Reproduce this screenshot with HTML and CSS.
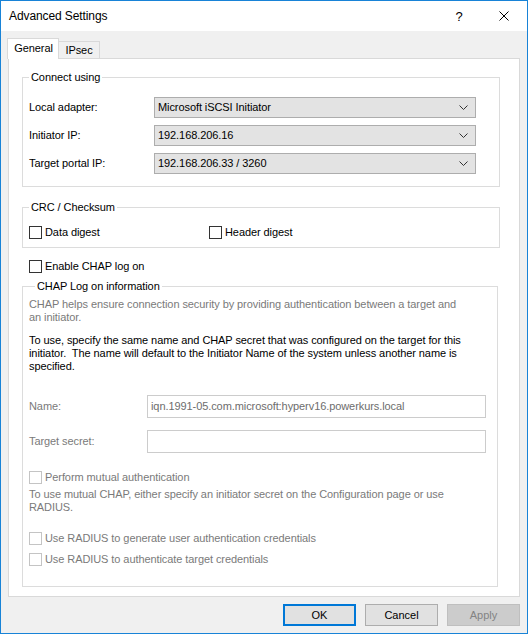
FILE: index.html
```html
<!DOCTYPE html>
<html>
<head>
<meta charset="utf-8">
<title>Advanced Settings</title>
<link rel="stylesheet" href="styles.css">
</head>
<body>
<div class="window">
  <div class="titlebar">
    <span class="title">Advanced Settings</span>
    <span class="help">?</span>
    <span class="close"><svg width="10" height="10" viewBox="0 0 10 10"><path d="M0.5 0.5 L9.5 9.5 M9.5 0.5 L0.5 9.5" stroke="#000" stroke-width="1" fill="none"/></svg></span>
  </div>
  <div class="client">
    <div class="tabs">
      <div class="tab active">General</div>
      <div class="tab">IPsec</div>
    </div>
    <div class="panel">
      <fieldset class="group connect">
        <legend>Connect using</legend>
        <div class="row first">
          <span class="lbl">Local adapter:</span>
          <div class="combo"><span>Microsoft iSCSI Initiator</span><svg class="chev" width="9" height="5" viewBox="0 0 9 5"><path d="M0.5 0.5 L4.5 4.5 L8.5 0.5" stroke="#333" fill="none"/></svg></div>
        </div>
        <div class="row">
          <span class="lbl">Initiator IP:</span>
          <div class="combo"><span>192.168.206.16</span><svg class="chev" width="9" height="5" viewBox="0 0 9 5"><path d="M0.5 0.5 L4.5 4.5 L8.5 0.5" stroke="#333" fill="none"/></svg></div>
        </div>
        <div class="row">
          <span class="lbl">Target portal IP:</span>
          <div class="combo"><span>192.168.206.33 / 3260</span><svg class="chev" width="9" height="5" viewBox="0 0 9 5"><path d="M0.5 0.5 L4.5 4.5 L8.5 0.5" stroke="#333" fill="none"/></svg></div>
        </div>
      </fieldset>

      <fieldset class="group crc">
        <legend>CRC / Checksum</legend>
        <div class="checks">
          <label class="check data"><span class="box"></span>Data digest</label>
          <label class="check"><span class="box"></span>Header digest</label>
        </div>
      </fieldset>

      <label class="check enable"><span class="box"></span>Enable CHAP log on</label>

      <fieldset class="group chap">
        <legend>CHAP Log on information</legend>
        <p class="gray intro">CHAP helps ensure connection security by providing authentication between a target and<br>an initiator.</p>
        <p class="usage">To use, specify the same name and CHAP secret that was configured on the target for this<br>initiator.&nbsp; The name will default to the Initiator Name of the system unless another name is<br>specified.</p>
        <div class="field name">
          <span class="flbl">Name:</span>
          <div class="input">iqn.1991-05.com.microsoft:hyperv16.powerkurs.local</div>
        </div>
        <div class="field secret">
          <span class="flbl">Target secret:</span>
          <div class="input"></div>
        </div>
        <label class="check dis mutual"><span class="box"></span>Perform mutual authentication</label>
        <p class="gray mutualhelp">To use mutual CHAP, either specify an initiator secret on the Configuration page or use<br>RADIUS.</p>
        <label class="check dis radius1"><span class="box"></span>Use RADIUS to generate user authentication credentials</label>
        <label class="check dis radius2"><span class="box"></span>Use RADIUS to authenticate target credentials</label>
      </fieldset>
    </div>
    <div class="buttons">
      <button class="btn default">OK</button>
      <button class="btn">Cancel</button>
      <button class="btn disabled">Apply</button>
    </div>
  </div>
</div>
</body>
</html>
```
FILE: styles.css
```css
html, body {
  margin: 0;
  padding: 0;
  background: #ffffff;
}
body {
  font-family: "Liberation Sans", Arial, sans-serif;
  font-size: 11px;
  line-height: 13px;
  letter-spacing: -0.08px;
  color: #000;
}
.window {
  width: 528px;
  height: 634px;
  box-sizing: border-box;
  border: 1px solid #1883d7;
  background: #f0f0f0;
  display: flex;
  flex-direction: column;
}
.titlebar {
  height: 30px;
  background: #fff;
  display: flex;
  align-items: center;
  flex-shrink: 0;
}
.title {
  font-size: 12px;
  letter-spacing: -0.1px;
  padding-left: 8px;
  flex: 1;
  padding-top: 1px;
}
.help {
  font-size: 13px;
  width: 10px;
  text-align: center;
  margin-right: 35px;
  padding-top: 1px;
}
.close {
  width: 10px;
  height: 10px;
  margin-right: 18px;
  display: flex;
}
.client {
  flex: 1;
  padding: 7px 7px 0 7px;
  display: flex;
  flex-direction: column;
}
.tabs {
  display: flex;
  align-items: flex-end;
  height: 20px;
  margin-left: -1px;
}
.tab {
  box-sizing: border-box;
  border: 1px solid #d9d9d9;
  border-bottom: none;
  background: #f0f0f0;
  height: 17px;
  width: 42px;
  margin-left: -1px;
  text-align: center;
  line-height: 17px;
}
.tab.active {
  background: #fff;
  height: 21px;
  width: 52px;
  margin-left: 0;
  margin-bottom: -1px;
  position: relative;
  z-index: 1;
  line-height: 18px;
  padding-left: 1px;
}
.panel {
  box-sizing: border-box;
  height: 539px;
  background: #fff;
  border: 1px solid #d9d9d9;
  padding: 12px 0 0 13px;
  display: flex;
  flex-direction: column;
  align-items: flex-start;
}
.group {
  margin: 0;
  border: 1px solid #dcdcdc;
  padding: 0 6px;
  box-sizing: border-box;
  width: 478px;
  min-width: 0;
}
.group legend {
  padding: 0 2px;
  margin-left: 0;
  line-height: 13px;
}
.connect {
  padding-top: 13px;
  padding-bottom: 12px;
}
.row {
  display: flex;
  align-items: center;
  margin-top: 7px;
}
.row.first {
  margin-top: 0;
}
.lbl {
  width: 125px;
}
.combo {
  box-sizing: border-box;
  width: 322px;
  height: 21px;
  border: 1px solid #adadad;
  background: #e3e3e3;
  display: flex;
  align-items: center;
  justify-content: space-between;
  padding: 0 7px 0 3px;
}
.chev {
  display: block;
}
.crc {
  margin-top: 14px;
  padding-top: 12px;
  padding-bottom: 8px;
}
.checks {
  display: flex;
}
.check {
  display: flex;
  align-items: center;
  height: 13px;
}
.check.data {
  width: 180px;
}
.box {
  box-sizing: border-box;
  width: 13px;
  height: 13px;
  border: 1px solid #333;
  background: #fff;
  margin-right: 3px;
  flex-shrink: 0;
}
.enable {
  margin-top: 12px;
  margin-left: 7px;
}
.chap {
  margin-top: 7px;
  width: 476px;
  padding-top: 5px;
  padding-bottom: 20px;
}
.chap legend {
  margin-left: 6px;
}
p {
  margin: 0;
  white-space: nowrap;
}
.gray {
  color: #7a7a7a;
}
.usage {
  margin-top: 10px;
}
.field {
  display: flex;
  align-items: center;
  color: #7a7a7a;
}
.field.name {
  margin-top: 22px;
}
.field.secret {
  margin-top: 12px;
}
.flbl {
  width: 118px;
}
.input {
  box-sizing: border-box;
  width: 339px;
  height: 23px;
  border: 1px solid #cccccc;
  background: #fff;
  padding: 0 3px;
  line-height: 21px;
  color: #6d6d6d;
}
.check.dis {
  color: #7a7a7a;
}
.check.dis .box {
  border-color: #c4c4c4;
}
.mutual {
  margin-top: 18px;
}
.mutualhelp {
  margin-top: 4px;
}
.radius1 {
  margin-top: 18px;
}
.radius2 {
  margin-top: 8px;
}
.buttons {
  display: flex;
  justify-content: flex-end;
  gap: 9px;
  margin-top: 7px;
}
.btn {
  box-sizing: border-box;
  width: 73px;
  height: 22px;
  border: 1px solid #adadad;
  background: #e1e1e1;
  font-family: "Liberation Sans", Arial, sans-serif;
  font-size: 11px;
  color: #000;
  padding: 0;
  margin: 0;
}
.btn.default {
  border: 2px solid #0078d7;
}
.btn.disabled {
  background: #cccccc;
  border-color: #bfbfbf;
  color: #838383;
}
```
